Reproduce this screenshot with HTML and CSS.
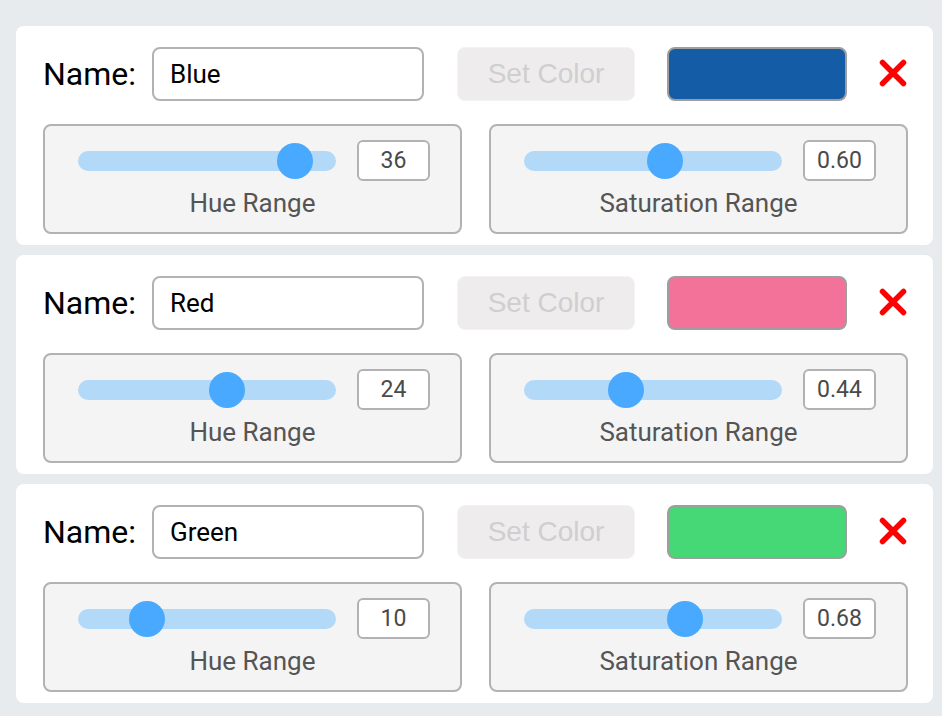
FILE: index.html
```html
<!DOCTYPE html>
<html>

<head>
    <meta charset="utf-8">
    <title>Color Ranges</title>
    <link rel="stylesheet" href="styles.css">
</head>

<body>
    <div class="color_list">

        <div class="color_card">
            <div class="top_row">
                <div class="name_group">
                    <label class="name_label">Name:</label>
                    <input class="name_input" type="text" value="Blue">
                </div>
                <button class="button_set_color" disabled>Set Color</button>
                <div class="swatch" style="background-color: #155ca6"></div>
                <button class="button_remove" title="Remove">
                    <svg width="30" height="30" viewBox="0 0 30 30">
                        <path d="M4.5 4.5 L25.5 25.5 M25.5 4.5 L4.5 25.5" />
                    </svg>
                </button>
            </div>
            <div class="ranges">
                <div class="range_panel">
                    <div class="slider_row">
                        <div class="track"><span class="thumb" style="left: 199px"></span></div>
                        <div class="value_box">36</div>
                    </div>
                    <div class="range_label">Hue Range</div>
                </div>
                <div class="range_panel">
                    <div class="slider_row">
                        <div class="track"><span class="thumb" style="left: 123px"></span></div>
                        <div class="value_box">0.60</div>
                    </div>
                    <div class="range_label">Saturation Range</div>
                </div>
            </div>
        </div>

        <div class="color_card">
            <div class="top_row">
                <div class="name_group">
                    <label class="name_label">Name:</label>
                    <input class="name_input" type="text" value="Red">
                </div>
                <button class="button_set_color" disabled>Set Color</button>
                <div class="swatch" style="background-color: #f37299"></div>
                <button class="button_remove" title="Remove">
                    <svg width="30" height="30" viewBox="0 0 30 30">
                        <path d="M4.5 4.5 L25.5 25.5 M25.5 4.5 L4.5 25.5" />
                    </svg>
                </button>
            </div>
            <div class="ranges">
                <div class="range_panel">
                    <div class="slider_row">
                        <div class="track"><span class="thumb" style="left: 131px"></span></div>
                        <div class="value_box">24</div>
                    </div>
                    <div class="range_label">Hue Range</div>
                </div>
                <div class="range_panel">
                    <div class="slider_row">
                        <div class="track"><span class="thumb" style="left: 84px"></span></div>
                        <div class="value_box">0.44</div>
                    </div>
                    <div class="range_label">Saturation Range</div>
                </div>
            </div>
        </div>

        <div class="color_card">
            <div class="top_row">
                <div class="name_group">
                    <label class="name_label">Name:</label>
                    <input class="name_input" type="text" value="Green">
                </div>
                <button class="button_set_color" disabled>Set Color</button>
                <div class="swatch" style="background-color: #46d877"></div>
                <button class="button_remove" title="Remove">
                    <svg width="30" height="30" viewBox="0 0 30 30">
                        <path d="M4.5 4.5 L25.5 25.5 M25.5 4.5 L4.5 25.5" />
                    </svg>
                </button>
            </div>
            <div class="ranges">
                <div class="range_panel">
                    <div class="slider_row">
                        <div class="track"><span class="thumb" style="left: 51px"></span></div>
                        <div class="value_box">10</div>
                    </div>
                    <div class="range_label">Hue Range</div>
                </div>
                <div class="range_panel">
                    <div class="slider_row">
                        <div class="track"><span class="thumb" style="left: 143px"></span></div>
                        <div class="value_box">0.68</div>
                    </div>
                    <div class="range_label">Saturation Range</div>
                </div>
            </div>
        </div>

    </div>
</body>

</html>
```

FILE: styles.css
```css
/* Page */

body {
    margin: 0;
    background-color: #e8ebee;
    font-family: Roboto, 'Noto Sans', sans-serif;
}

.color_list {
    display: flex;
    flex-direction: column;
    gap: 10px;
    padding: 26px 9px 0 16px;
}

/* One color entry */

.color_card {
    background-color: #ffffff;
    border-radius: 8px;
    padding: 21px 25px 11px 27px;
}

.top_row {
    display: flex;
    align-items: center;
    height: 54px;
}

.name_group {
    display: flex;
    align-items: center;
}

.name_label {
    width: 109px;
    font-size: 32px;
    color: #000000;
}

.name_input {
    box-sizing: border-box;
    width: 272px;
    height: 54px;
    padding: 0 16px;
    border: 2px solid #b2b2b2;
    border-radius: 8px;
    font-family: Roboto, sans-serif;
    font-size: 26px;
    color: #000000;
    outline: none;
}

.button_set_color {
    box-sizing: border-box;
    width: 178px;
    height: 54px;
    margin-left: 33px;
    border: 1px solid #f3f3f3;
    border-radius: 8px;
    background-color: #eeeced;
    color: #cfcfcf;
    font-family: 'Liberation Sans', Arial, sans-serif;
    font-size: 28px;
}

.swatch {
    box-sizing: border-box;
    width: 180px;
    height: 54px;
    margin-left: 32px;
    border: 2px solid #9e9e9e;
    border-radius: 8px;
}

.button_remove {
    width: 30px;
    height: 30px;
    padding: 0;
    margin: 0 0 2px 31px;
    border: none;
    background: none;
    cursor: pointer;
}

.button_remove svg {
    display: block;
}

.button_remove path {
    stroke: #ff0000;
    stroke-width: 5.5;
    stroke-linecap: round;
    fill: none;
}

/* Sliders */

.ranges {
    display: grid;
    grid-template-columns: 1fr 1fr;
    gap: 27px;
    margin-top: 23px;
}

.range_panel {
    box-sizing: border-box;
    height: 110px;
    padding: 14px 0 0 33px;
    border: 2px solid #b2b2b2;
    border-radius: 8px;
    background-color: #f4f4f4;
}

.slider_row {
    display: flex;
    align-items: center;
    gap: 21px;
}

.track {
    position: relative;
    width: 258px;
    height: 20px;
    border-radius: 10px;
    background-color: #b3d9f8;
}

.thumb {
    position: absolute;
    top: -8px;
    width: 36px;
    height: 36px;
    border-radius: 50%;
    background-color: #48a9fe;
}

.value_box {
    box-sizing: border-box;
    width: 73px;
    height: 41px;
    border: 2px solid #b2b2b2;
    border-radius: 6px;
    background-color: #ffffff;
    color: #4a4a4a;
    font-size: 23px;
    line-height: 37px;
    text-align: center;
}

.range_label {
    margin: 7px 0 0 -33px;
    font-size: 26px;
    line-height: 30px;
    color: #555555;
    text-align: center;
}
```
